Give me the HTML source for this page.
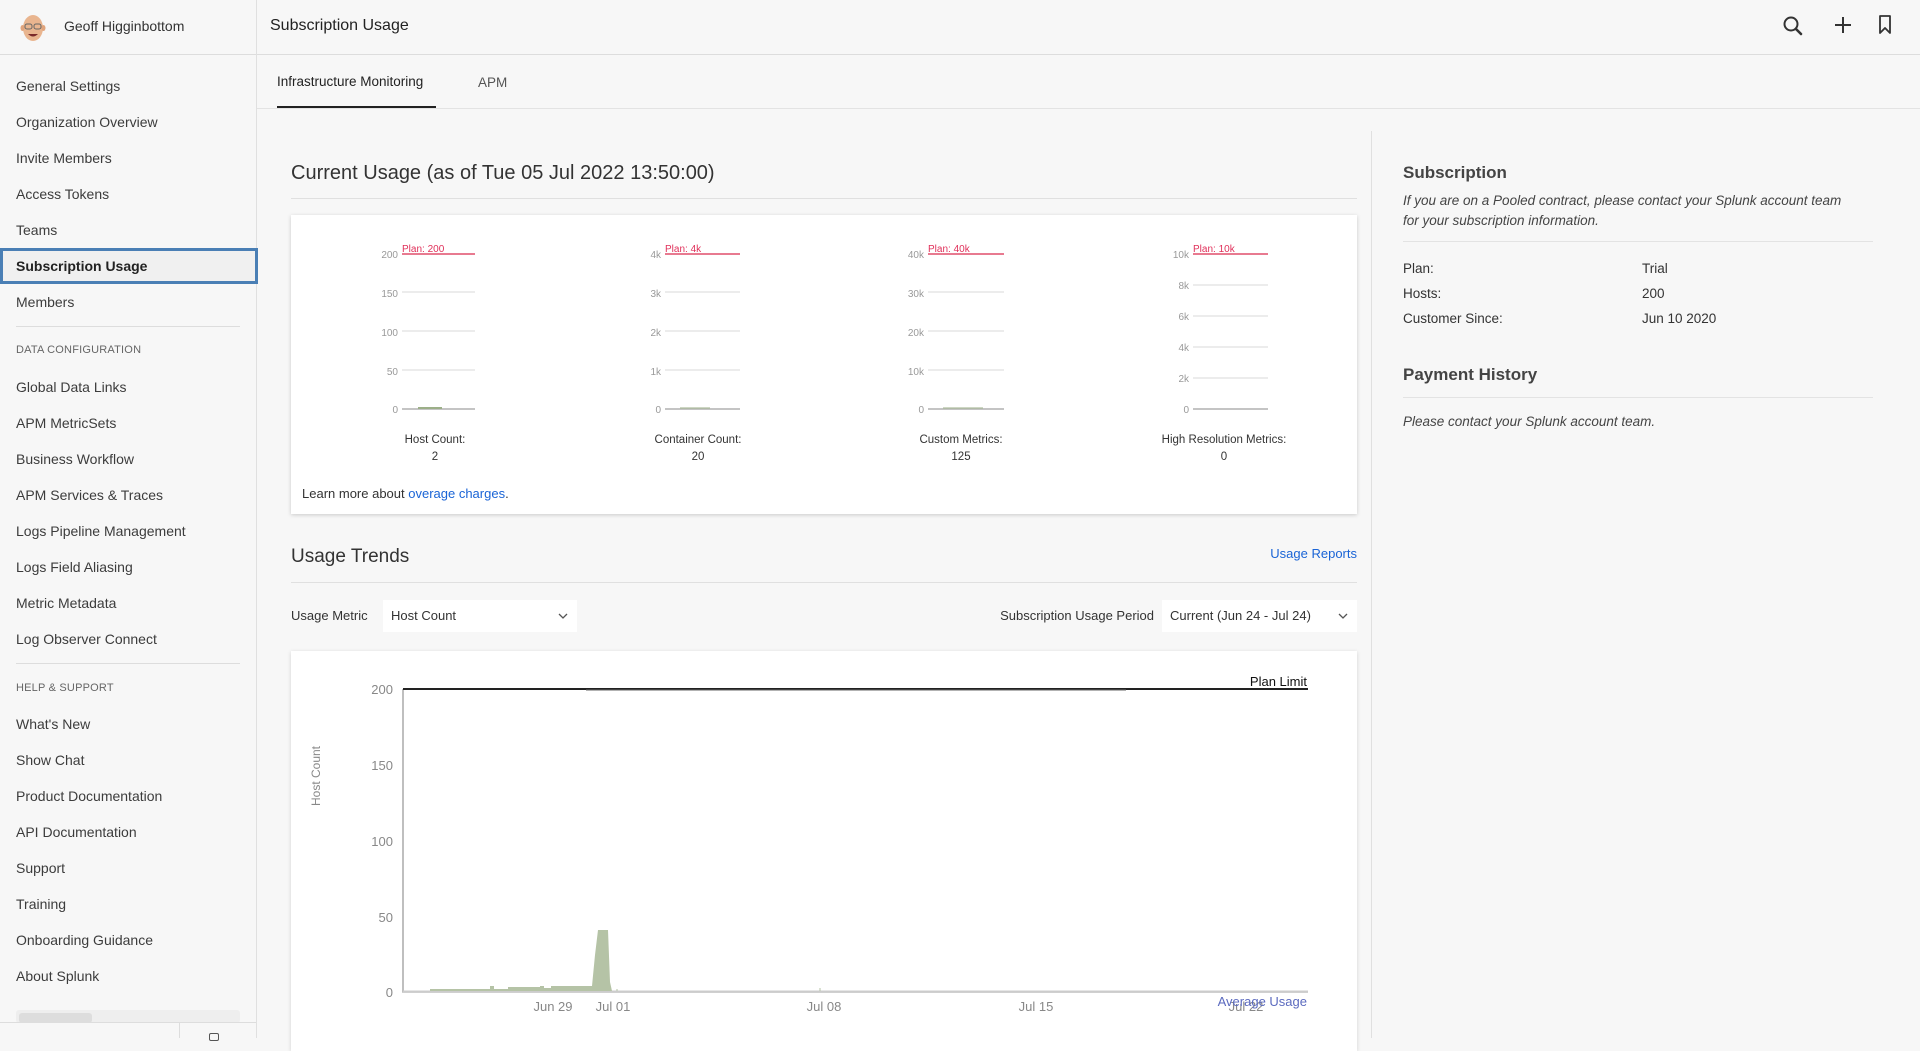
<!DOCTYPE html>
<html><head><meta charset="utf-8">
<style>
*{margin:0;padding:0;box-sizing:border-box}
body{width:1920px;height:1038px;background:#f7f7f7;font-family:"Liberation Sans",sans-serif;color:#333;position:relative;overflow:hidden}
.a{position:absolute;white-space:nowrap}
.nav{font-size:14px;color:#3c3c3c;left:16px;line-height:18px}
.sec{font-size:11px;color:#666;left:16px;letter-spacing:.2px}
.tick{font-size:10px;fill:#999;text-anchor:end;font-family:"Liberation Sans",sans-serif}
</style></head><body>
<div class="a" style="left:0;top:0;width:1920px;height:55px;border-bottom:1px solid #ddd;background:#f7f7f7"></div>
<div class="a" style="left:256px;top:0;width:1px;height:1038px;background:#e0e0e0"></div>
<svg class="a" style="left:19px;top:12px" width="28" height="32" viewBox="0 0 28 32">
<ellipse cx="14" cy="16" rx="10" ry="13" fill="#e9b58f"/>
<ellipse cx="3.5" cy="16" rx="2" ry="3" fill="#e0a47c"/><ellipse cx="24.5" cy="16" rx="2" ry="3" fill="#e0a47c"/>
<rect x="6" y="12" width="7" height="5" rx="2" fill="none" stroke="#666" stroke-width="1"/>
<rect x="15" y="12" width="7" height="5" rx="2" fill="none" stroke="#666" stroke-width="1"/>
<path d="M9 22 Q14 27 19 22 Z" fill="#7a2a2a"/>
</svg>
<div class="a" style="left:64px;top:18px;font-size:14px;color:#333">Geoff Higginbottom</div>
<div class="a" style="left:270px;top:17px;font-size:16px;color:#222">Subscription Usage</div>
<svg class="a" style="left:1781px;top:14px" width="24" height="24" viewBox="0 0 24 24"><circle cx="10" cy="10" r="6.5" fill="none" stroke="#333" stroke-width="2"/><path d="M15 15l5 5" stroke="#333" stroke-width="2.6" stroke-linecap="round"/></svg>
<svg class="a" style="left:1832px;top:14px" width="22" height="22" viewBox="0 0 22 22"><path d="M11 3v16M3 11h16" stroke="#333" stroke-width="2"/></svg>
<svg class="a" style="left:1877px;top:14px" width="16" height="22" viewBox="0 0 16 22"><path d="M3 2h10v17l-5-5-5 5z" fill="none" stroke="#333" stroke-width="1.8" stroke-linejoin="round"/></svg>

<div class="a nav" style="top:77px">General Settings</div>
<div class="a nav" style="top:113px">Organization Overview</div>
<div class="a nav" style="top:149px">Invite Members</div>
<div class="a nav" style="top:185px">Access Tokens</div>
<div class="a nav" style="top:221px">Teams</div>
<div class="a" style="left:0;top:248px;width:258px;height:36px;border:3px solid #4a7fb5;background:#f0f0f0"></div>
<div class="a nav" style="top:257px;font-weight:bold;color:#222">Subscription Usage</div>
<div class="a nav" style="top:293px">Members</div>
<div class="a" style="left:16px;top:326px;width:224px;height:1px;background:#ddd"></div>
<div class="a sec" style="top:344px">DATA CONFIGURATION</div>
<div class="a nav" style="top:378px">Global Data Links</div>
<div class="a nav" style="top:414px">APM MetricSets</div>
<div class="a nav" style="top:450px">Business Workflow</div>
<div class="a nav" style="top:486px">APM Services &amp; Traces</div>
<div class="a nav" style="top:522px">Logs Pipeline Management</div>
<div class="a nav" style="top:558px">Logs Field Aliasing</div>
<div class="a nav" style="top:594px">Metric Metadata</div>
<div class="a nav" style="top:630px">Log Observer Connect</div>
<div class="a" style="left:16px;top:663px;width:224px;height:1px;background:#ddd"></div>
<div class="a sec" style="top:682px">HELP &amp; SUPPORT</div>
<div class="a nav" style="top:715px">What's New</div>
<div class="a nav" style="top:751px">Show Chat</div>
<div class="a nav" style="top:787px">Product Documentation</div>
<div class="a nav" style="top:823px">API Documentation</div>
<div class="a nav" style="top:859px">Support</div>
<div class="a nav" style="top:895px">Training</div>
<div class="a nav" style="top:931px">Onboarding Guidance</div>
<div class="a nav" style="top:967px">About Splunk</div>
<div class="a" style="left:16px;top:1010px;width:224px;height:13px;background:#eee;border-radius:3px"></div>
<div class="a" style="left:19px;top:1013px;width:73px;height:10px;background:#ddd;border-radius:3px"></div>
<div class="a" style="left:0;top:1022px;width:256px;height:1px;background:#ddd"></div>
<div class="a" style="left:179px;top:1022px;width:1px;height:16px;background:#ddd"></div>
<div class="a" style="left:209px;top:1033px;width:10px;height:8px;border:1.5px solid #555;border-radius:2px"></div>

<div class="a" style="left:257px;top:108px;width:1663px;height:1px;background:#e3e3e3"></div>
<div class="a" style="left:277px;top:74px;font-size:13.5px;color:#222">Infrastructure Monitoring</div>
<div class="a" style="left:277px;top:106px;width:159px;height:2px;background:#222"></div>
<div class="a" style="left:478px;top:75px;font-size:13.5px;color:#555">APM</div>
<div class="a" style="left:1371px;top:131px;width:1px;height:907px;background:#e0e0e0"></div>

<div class="a" style="left:291px;top:162px;font-size:20px;color:#333">Current Usage (as of Tue 05 Jul 2022 13:50:00)</div>
<div class="a" style="left:291px;top:198px;width:1066px;height:1px;background:#e0e0e0"></div>
<div class="a" style="left:291px;top:215px;width:1066px;height:299px;background:#fff;box-shadow:0 1px 4px rgba(0,0,0,.18)"></div>
<svg class="a" style="left:0;top:0" width="1400" height="520">
<g>
<g stroke="#ececec" stroke-width="2"><path d="M402 292h73M402 331h73M402 370h73"/></g>
<path d="M402 254h73" stroke="#e87a90" stroke-width="2"/>
<path d="M402 409h73" stroke="#c4c4c4" stroke-width="2"/>
<path d="M418 408h24" stroke="#9caf88" stroke-width="2"/>
<text class="tick" x="398" y="258">200</text><text class="tick" x="398" y="297">150</text><text class="tick" x="398" y="336">100</text><text class="tick" x="398" y="375">50</text><text class="tick" x="398" y="413">0</text>
<text x="402" y="252" font-size="10" fill="#e0305a">Plan: 200</text>
</g>
<g>
<g stroke="#ececec" stroke-width="2"><path d="M665 292h75M665 331h75M665 370h75"/></g>
<path d="M665 254h75" stroke="#e87a90" stroke-width="2"/>
<path d="M665 409h75" stroke="#c4c4c4" stroke-width="2"/>
<path d="M680 408h30" stroke="#9caf88" stroke-width="1"/>
<text class="tick" x="661" y="258">4k</text><text class="tick" x="661" y="297">3k</text><text class="tick" x="661" y="336">2k</text><text class="tick" x="661" y="375">1k</text><text class="tick" x="661" y="413">0</text>
<text x="665" y="252" font-size="10" fill="#e0305a">Plan: 4k</text>
</g>
<g>
<g stroke="#ececec" stroke-width="2"><path d="M928 292h76M928 331h76M928 370h76"/></g>
<path d="M928 254h76" stroke="#e87a90" stroke-width="2"/>
<path d="M928 409h76" stroke="#c4c4c4" stroke-width="2"/>
<path d="M943 408h40" stroke="#9caf88" stroke-width="1"/>
<text class="tick" x="924" y="258">40k</text><text class="tick" x="924" y="297">30k</text><text class="tick" x="924" y="336">20k</text><text class="tick" x="924" y="375">10k</text><text class="tick" x="924" y="413">0</text>
<text x="928" y="252" font-size="10" fill="#e0305a">Plan: 40k</text>
</g>
<g>
<g stroke="#ececec" stroke-width="2"><path d="M1193 285h75M1193 316h75M1193 347h75M1193 378h75"/></g>
<path d="M1193 254h75" stroke="#e87a90" stroke-width="2"/>
<path d="M1193 409h75" stroke="#c4c4c4" stroke-width="2"/>
<text class="tick" x="1189" y="258">10k</text><text class="tick" x="1189" y="289">8k</text><text class="tick" x="1189" y="320">6k</text><text class="tick" x="1189" y="351">4k</text><text class="tick" x="1189" y="382">2k</text><text class="tick" x="1189" y="413">0</text>
<text x="1193" y="252" font-size="10" fill="#e0305a">Plan: 10k</text>
</g>
<g font-size="11.5" fill="#333" text-anchor="middle" font-family="Liberation Sans,sans-serif">
<text x="435" y="443">Host Count:</text><text x="435" y="460">2</text>
<text x="698" y="443">Container Count:</text><text x="698" y="460">20</text>
<text x="961" y="443">Custom Metrics:</text><text x="961" y="460">125</text>
<text x="1224" y="443">High Resolution Metrics:</text><text x="1224" y="460">0</text>
</g>
</svg>
<div class="a" style="left:302px;top:486px;font-size:13px;color:#333">Learn more about <span style="color:#1a64d6">overage charges</span>.</div>

<div class="a" style="left:291px;top:546px;font-size:19px;color:#333">Usage Trends</div>
<div class="a" style="left:1264px;top:546px;width:93px;text-align:right;font-size:13px;color:#1a64d6">Usage Reports</div>
<div class="a" style="left:291px;top:582px;width:1066px;height:1px;background:#e0e0e0"></div>
<div class="a" style="left:291px;top:608px;font-size:13px;color:#333">Usage Metric</div>
<div class="a" style="left:383px;top:600px;width:194px;height:32px;background:#fff"></div>
<div class="a" style="left:391px;top:608px;font-size:13px;color:#333">Host Count</div>
<svg class="a" style="left:557px;top:611px" width="12" height="10"><path d="M2 3l4 4 4-4" fill="none" stroke="#555" stroke-width="1.3"/></svg>
<div class="a" style="left:954px;top:608px;width:200px;text-align:right;font-size:13px;color:#333">Subscription Usage Period</div>
<div class="a" style="left:1162px;top:600px;width:195px;height:32px;background:#fff"></div>
<div class="a" style="left:1170px;top:608px;font-size:13px;color:#333">Current (Jun 24 - Jul 24)</div>
<svg class="a" style="left:1337px;top:611px" width="12" height="10"><path d="M2 3l4 4 4-4" fill="none" stroke="#555" stroke-width="1.3"/></svg>

<div class="a" style="left:291px;top:651px;width:1066px;height:400px;background:#fff;box-shadow:0 1px 4px rgba(0,0,0,.15)"></div>
<svg class="a" style="left:0;top:0" width="1400" height="1038">
<path d="M403 689v303h905" fill="none" stroke="#aaa" stroke-width="1.5"/>
<path d="M403 991.5h905" stroke="#ccc" stroke-width="2"/>
<path d="M403 689h905" stroke="#222" stroke-width="2"/>
<path d="M586 690h540" stroke="#666" stroke-width="1"/>
<path d="M430 991V989H490V986H494V989H508V987H540V986H544V988H551V986H592L595 955L598 930H608L610 982L612 991Z" fill="#b5c3a6"/>
<path d="M617 991v-2M820 991v-3" stroke="#b5c3a6" stroke-width="1"/>
<g font-size="13" fill="#888" text-anchor="end" font-family="Liberation Sans,sans-serif">
<text x="393" y="694">200</text><text x="393" y="770">150</text><text x="393" y="846">100</text><text x="393" y="922">50</text><text x="393" y="997">0</text>
</g>
<text x="320" y="776" font-size="12" fill="#888" text-anchor="middle" transform="rotate(-90 320 776)" font-family="Liberation Sans,sans-serif">Host Count</text>
<g font-size="13" fill="#888" text-anchor="middle" font-family="Liberation Sans,sans-serif">
<text x="553" y="1011">Jun 29</text><text x="613" y="1011">Jul 01</text><text x="824" y="1011">Jul 08</text><text x="1036" y="1011">Jul 15</text><text x="1246" y="1011">Jul 22</text>
</g>
<text x="1307" y="1006" font-size="13" fill="#5b6abf" text-anchor="end" font-family="Liberation Sans,sans-serif">Average Usage</text>
<text x="1307" y="686" font-size="13" fill="#111" text-anchor="end" font-family="Liberation Sans,sans-serif">Plan Limit</text>
</svg>

<div class="a" style="left:1403px;top:163px;font-size:17px;font-weight:bold;color:#444">Subscription</div>
<div class="a" style="left:1403px;top:191px;font-size:13.5px;font-style:italic;color:#444;line-height:20px">If you are on a Pooled contract, please contact your Splunk account team<br>for your subscription information.</div>
<div class="a" style="left:1403px;top:241px;width:470px;height:1px;background:#e3e3e3"></div>
<div class="a" style="left:1403px;top:256px;font-size:13.5px;color:#333;line-height:25px">Plan:<br>Hosts:<br>Customer Since:</div>
<div class="a" style="left:1642px;top:256px;font-size:13.5px;color:#333;line-height:25px">Trial<br>200<br>Jun 10 2020</div>
<div class="a" style="left:1403px;top:365px;font-size:17px;font-weight:bold;color:#444">Payment History</div>
<div class="a" style="left:1403px;top:397px;width:470px;height:1px;background:#e3e3e3"></div>
<div class="a" style="left:1403px;top:414px;font-size:13.5px;font-style:italic;color:#444">Please contact your Splunk account team.</div>
</body></html>
